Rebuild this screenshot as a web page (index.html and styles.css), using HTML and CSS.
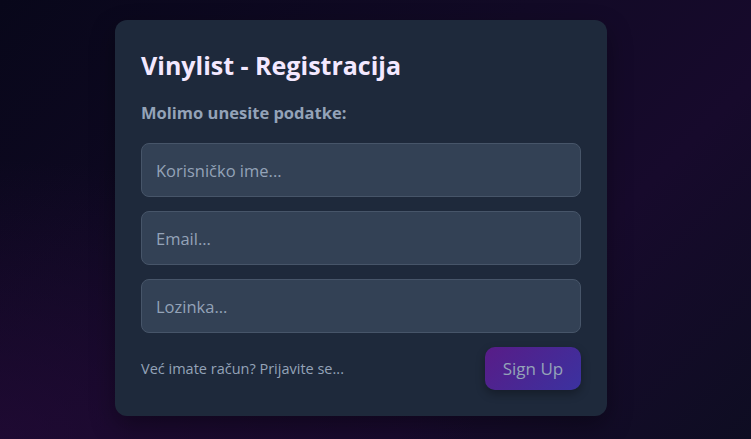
FILE: index.html
```html
<!DOCTYPE html>
<html lang="hr">
<head>
<meta charset="utf-8">
<title>Vinylist - Registracija</title>
<link rel="stylesheet" href="styles.css">
</head>
<body>
<main class="page">
  <form class="card">
    <h1 class="title">Vinylist - Registracija</h1>
    <p class="subtitle">Molimo unesite podatke:</p>
    <div class="fields">
      <input class="field" type="text" placeholder="Korisničko ime...">
      <input class="field" type="email" placeholder="Email...">
      <input class="field" type="password" placeholder="Lozinka...">
    </div>
    <div class="footer">
      <a class="login-link" href="#">Već imate račun? Prijavite se...</a>
      <button class="submit" type="button">Sign Up</button>
    </div>
  </form>
</main>
</body>
</html>
```
FILE: styles.css
```css
* { box-sizing: border-box; }
html, body { margin: 0; height: 100%; }
body {
  font-family: "Open Sans", "Noto Sans", sans-serif;
  background: linear-gradient(135deg, #08071a 0%, #120a26 45%, #170a2c 70%, #0e0d22 100%);
  background-color: #0f0b22;
  overflow: hidden;
}
.page {
  height: 100%;
  padding-top: 20px;
  padding-left: 115px;
  background: radial-gradient(ellipse at 0% 100%, rgba(40, 10, 60, 0.6), transparent 45%);
}
.card {
  width: 492px;
  height: 396px;
  background: #1e293b;
  border-radius: 12px;
  padding: 26px;
  display: flex;
  flex-direction: column;
  box-shadow: 0 10px 25px rgba(0, 0, 0, 0.35);
}
.title {
  margin: 2px 0 0;
  font-size: 25px;
  line-height: 34px;
  font-weight: 700;
  color: #f3e8ff;
}
.subtitle {
  margin: 20px 0 0;
  font-size: 16.5px;
  line-height: 22px;
  font-weight: 700;
  color: #94a3b8;
}
.fields {
  margin-top: 19px;
  display: flex;
  flex-direction: column;
  gap: 14px;
}
.field {
  width: 440px;
  height: 54px;
  background: #334155;
  border: 1px solid #475569;
  border-radius: 8px;
  padding: 0 14px;
  font-family: inherit;
  font-size: 16.5px;
  color: #e2e8f0;
  outline: none;
}
.field::placeholder { color: #94a3b8; }
.footer {
  margin-top: 14px;
  display: flex;
  justify-content: space-between;
  align-items: center;
}
.login-link {
  font-size: 14.5px;
  color: #94a3b8;
  text-decoration: none;
}
.submit {
  width: 96px;
  height: 43px;
  border: none;
  border-radius: 10px;
  background: linear-gradient(135deg, #581c87 0%, #3b32a0 100%);
  color: #94a3b8;
  font-family: inherit;
  font-size: 17px;
  box-shadow: 0 4px 10px rgba(0, 0, 0, 0.3);
}
```
